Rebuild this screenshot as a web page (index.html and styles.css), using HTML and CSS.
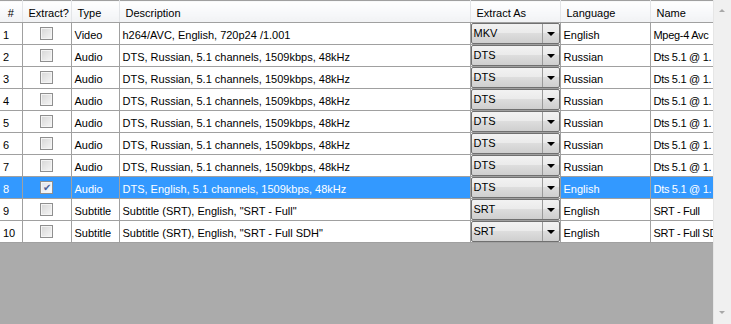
FILE: index.html
```html
<!DOCTYPE html>
<html lang="en">
<head>
  <meta charset="UTF-8">
  <title>Tracks</title>
  <link rel="stylesheet" href="styles.css">
</head>
<body>

  <div class="grid">
    <div class="grid-body">
      <table class="tracks">
        <colgroup>
          <col class="c-num"><col class="c-ext"><col class="c-type"><col class="c-desc">
          <col class="c-as"><col class="c-lang"><col class="c-name">
        </colgroup>
        <thead>
          <tr>
            <th class="num">#</th><th>Extract?</th><th>Type</th><th>Description</th>
            <th>Extract As</th><th>Language</th><th>Name</th>
          </tr>
        </thead>
        <tbody>
          <tr>
            <td>1</td><td class="chk"><span class="box"></span></td><td>Video</td>
            <td>h264/AVC, English, 720p24 /1.001</td>
            <td class="combo-cell"><div class="combo"><span class="val">MKV</span><span class="btn"></span></div></td>
            <td>English</td><td class="name">Mpeg-4 Avc</td>
          </tr>
          <tr>
            <td>2</td><td class="chk"><span class="box"></span></td><td>Audio</td>
            <td>DTS, Russian, 5.1 channels, 1509kbps, 48kHz</td>
            <td class="combo-cell"><div class="combo"><span class="val">DTS</span><span class="btn"></span></div></td>
            <td>Russian</td><td class="name">Dts 5.1 @ 1.</td>
          </tr>
          <tr>
            <td>3</td><td class="chk"><span class="box"></span></td><td>Audio</td>
            <td>DTS, Russian, 5.1 channels, 1509kbps, 48kHz</td>
            <td class="combo-cell"><div class="combo"><span class="val">DTS</span><span class="btn"></span></div></td>
            <td>Russian</td><td class="name">Dts 5.1 @ 1.</td>
          </tr>
          <tr>
            <td>4</td><td class="chk"><span class="box"></span></td><td>Audio</td>
            <td>DTS, Russian, 5.1 channels, 1509kbps, 48kHz</td>
            <td class="combo-cell"><div class="combo"><span class="val">DTS</span><span class="btn"></span></div></td>
            <td>Russian</td><td class="name">Dts 5.1 @ 1.</td>
          </tr>
          <tr>
            <td>5</td><td class="chk"><span class="box"></span></td><td>Audio</td>
            <td>DTS, Russian, 5.1 channels, 1509kbps, 48kHz</td>
            <td class="combo-cell"><div class="combo"><span class="val">DTS</span><span class="btn"></span></div></td>
            <td>Russian</td><td class="name">Dts 5.1 @ 1.</td>
          </tr>
          <tr>
            <td>6</td><td class="chk"><span class="box"></span></td><td>Audio</td>
            <td>DTS, Russian, 5.1 channels, 1509kbps, 48kHz</td>
            <td class="combo-cell"><div class="combo"><span class="val">DTS</span><span class="btn"></span></div></td>
            <td>Russian</td><td class="name">Dts 5.1 @ 1.</td>
          </tr>
          <tr>
            <td>7</td><td class="chk"><span class="box"></span></td><td>Audio</td>
            <td>DTS, Russian, 5.1 channels, 1509kbps, 48kHz</td>
            <td class="combo-cell"><div class="combo"><span class="val">DTS</span><span class="btn"></span></div></td>
            <td>Russian</td><td class="name">Dts 5.1 @ 1.</td>
          </tr>
          <tr class="selected">
            <td>8</td><td class="chk"><span class="box checked">&#10004;</span></td><td>Audio</td>
            <td>DTS, English, 5.1 channels, 1509kbps, 48kHz</td>
            <td class="combo-cell"><div class="combo"><span class="val">DTS</span><span class="btn"></span></div></td>
            <td>English</td><td class="name">Dts 5.1 @ 1.</td>
          </tr>
          <tr>
            <td>9</td><td class="chk"><span class="box"></span></td><td>Subtitle</td>
            <td>Subtitle (SRT), English, "SRT - Full"</td>
            <td class="combo-cell"><div class="combo"><span class="val">SRT</span><span class="btn"></span></div></td>
            <td>English</td><td class="name">SRT - Full</td>
          </tr>
          <tr>
            <td>10</td><td class="chk"><span class="box"></span></td><td>Subtitle</td>
            <td>Subtitle (SRT), English, "SRT - Full SDH"</td>
            <td class="combo-cell"><div class="combo"><span class="val">SRT</span><span class="btn"></span></div></td>
            <td>English</td><td class="name">SRT - Full SD</td>
          </tr>
        </tbody>
      </table>
    </div>

    <!-- vertical scrollbar -->
    <div class="vscroll">
      <span class="arrow up"></span>
      <span class="arrow down"></span>
    </div>
  </div>

</body>
</html>
```

FILE: styles.css
```css
body {
  margin: 0;
  font-family: 'Liberation Sans', Arial, sans-serif;
  font-size: 11px;
  color: #000;
  background: #ababab;
}

.grid {
  display: flex;
  width: 731px;
  height: 324px;
  overflow: hidden;
}

.grid-body {
  flex: 1;
  overflow: hidden;
  background: #ababab;
}

.tracks {
  border-collapse: collapse;
  table-layout: fixed;
  width: 714px;
  border-top: 1px solid #a0a0a0;
}

.c-num { width: 22px; }
.c-ext { width: 49px; }
.c-type { width: 48px; }
.c-desc { width: 351px; }
.c-as { width: 90px; }
.c-lang { width: 90px; }
.c-name { width: 64px; }

.tracks th {
  height: 22px;
  padding: 2px 0 0 6px;
  box-sizing: border-box;
  text-align: left;
  font-weight: normal;
  color: #000;
  background: linear-gradient(#ffffff, #f7f8fa 55%, #f1f2f4);
  border-right: 1px solid #e3e5e8;
  border-bottom: 1px solid #a0a0a0;
  white-space: nowrap;
  overflow: hidden;
}

.tracks th.num {
  text-align: center;
  padding-left: 0;
}

.tracks td {
  height: 21px;
  padding: 2px 0 0 3px;
  box-sizing: border-box;
  background: #fff;
  border-right: 1px solid #a0a0a0;
  border-bottom: 1px solid #a0a0a0;
  white-space: nowrap;
  overflow: hidden;
}

.tracks td.name {
  border-right: none;
  letter-spacing: -0.3px;
}

.tracks tr.selected td {
  background: #3399ff;
  color: #fff;
}

.tracks td.chk {
  padding: 0;
  text-align: center;
}

.box {
  display: inline-block;
  width: 11px;
  height: 11px;
  border: 1px solid #8f8f8f;
  background: linear-gradient(135deg, #d6d6d6, #f6f6f6);
  box-shadow: inset 0 0 0 1px #f4f4f4;
  vertical-align: middle;
  font-size: 10px;
  line-height: 11px;
  color: #4a5f97;
}

.box.checked {
  background: linear-gradient(135deg, #dde2ec, #fafbfd);
}

.tracks td.combo-cell,
.tracks tr.selected td.combo-cell {
  padding: 0;
  background: #fff;
}

.combo {
  display: flex;
  height: 19px;
  border: 1px solid #707070;
  border-radius: 2px;
  background: linear-gradient(#f2f2f2, #ebebeb 45%, #dddddd 50%, #cfcfcf);
  color: #000;
}

.combo .val {
  flex: 1;
  padding-left: 2px;
  line-height: 19px;
}

.combo .btn {
  position: relative;
  width: 16px;
  border-left: 1px solid #9a9a9a;
}

.combo .btn::after {
  content: "";
  position: absolute;
  left: 4px;
  top: 8px;
  border-left: 4px solid transparent;
  border-right: 4px solid transparent;
  border-top: 4px solid #000;
}

.vscroll {
  position: relative;
  width: 17px;
  background: #f0f0f0;
  border-left: 1px solid #e6e6e6;
}

.arrow {
  position: absolute;
  left: 5px;
  border-left: 3px solid transparent;
  border-right: 3px solid transparent;
}

.arrow.up {
  top: 9px;
  border-bottom: 3px solid #a8a8a8;
}

.arrow.down {
  bottom: 10px;
  border-top: 3px solid #a8a8a8;
}
```
